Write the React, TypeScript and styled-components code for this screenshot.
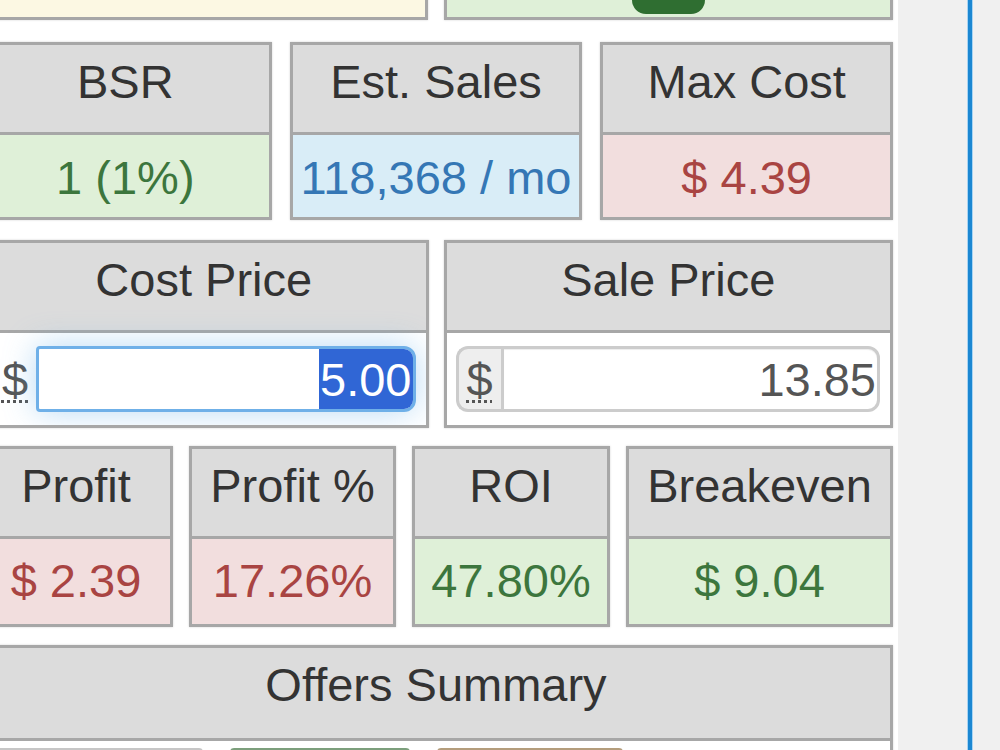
import styled, { createGlobalStyle } from "styled-components"

const GlobalStyle = createGlobalStyle`
  html, body {
    margin: 0;
    padding: 0;
    height: 750px;
    overflow: hidden;
    background: #ffffff;
    font-family: "Liberation Sans", Arial, sans-serif;
  }
  * {
    box-sizing: border-box;
  }
`

type Tone = "success" | "info" | "danger" | "warning" | "plain"

const tones: Record<Tone, { bg: string; fg: string }> = {
  success: { bg: "#dff0d8", fg: "#3c763d" },
  info: { bg: "#d9edf7", fg: "#3577b5" },
  danger: { bg: "#f2dede", fg: "#a94442" },
  warning: { bg: "#fcf8e3", fg: "#8a6d3b" },
  plain: { bg: "#ffffff", fg: "#555555" },
}

const Page = styled.div`
  display: flex;
  height: 750px;
  overflow: hidden;
`

const Main = styled.div`
  flex: none;
  width: 898px;
  background: #ffffff;
`

const Content = styled.div`
  width: 914px;
  margin-left: -21px;
  margin-top: -60px;
  display: flex;
  flex-direction: column;
  gap: 18px;
`

const Side = styled.div`
  flex: 1;
  background: #f0f0f0;
  padding-left: 69px;
`

const ScrollLine = styled.div`
  width: 6px;
  height: 100%;
  background: #1b87d2;
  border-left: 1px solid #a9d4f2;
  border-right: 1px solid #a9d4f2;
`

const Row = styled.div<{ $cols: string; $h: number; $gap?: number; $mt?: number }>`
  display: grid;
  grid-template-columns: ${(p) => p.$cols};
  column-gap: ${(p) => p.$gap ?? 16}px;
  height: ${(p) => p.$h}px;
  margin-top: ${(p) => p.$mt ?? 0}px;
`

const Card = styled.div<{ $tone?: Tone }>`
  display: flex;
  flex-direction: column;
  border: 3px solid #a7a7a7;
  background: ${(p) => tones[p.$tone ?? "plain"].bg};
  box-shadow: 0 0 2px rgba(0, 0, 0, 0.18);
  overflow: hidden;
`

const CardHead = styled.div<{ $h?: number }>`
  flex: none;
  height: ${(p) => p.$h ?? 90}px;
  padding-top: 10px;
  background: #dcdcdc;
  border-bottom: 3px solid #a7a7a7;
  color: #333333;
  font-size: 47px;
  line-height: 1.15;
  text-align: center;
  white-space: nowrap;
`

const CardValue = styled.div<{ $tone: Tone; $pt?: number }>`
  flex: 1;
  display: flex;
  align-items: center;
  justify-content: center;
  padding-top: ${(p) => p.$pt ?? 0}px;
  background: ${(p) => tones[p.$tone].bg};
  color: ${(p) => tones[p.$tone].fg};
  font-size: 47px;
  line-height: 1.15;
  white-space: nowrap;
`

const PriceCell = styled.div`
  flex: 1;
  display: flex;
  align-items: center;
  padding: 0 10px 0 9px;
  background: #ffffff;
`

const InputGroup = styled.div`
  display: flex;
  width: 100%;
  height: 66px;
`

const Addon = styled.div<{ $bare?: boolean }>`
  flex: none;
  width: 45px;
  display: flex;
  align-items: center;
  justify-content: center;
  background: ${(p) => (p.$bare ? "transparent" : "#eeeeee")};
  border: 3px solid ${(p) => (p.$bare ? "transparent" : "#cccccc")};
  border-right: 0;
  border-radius: 12px 0 0 12px;
  color: #555555;
  font-size: 47px;
  line-height: 1;
`

const Abbr = styled.abbr`
  text-decoration: underline dotted #555555;
  text-decoration-thickness: 3px;
  text-underline-offset: 4px;
  cursor: help;
`

const Field = styled.div<{ $focused?: boolean }>`
  flex: 1;
  display: flex;
  justify-content: flex-end;
  align-items: stretch;
  overflow: hidden;
  background: #ffffff;
  border: 3px solid ${(p) => (p.$focused ? "#6fb0e8" : "#cccccc")};
  border-radius: ${(p) => (p.$focused ? "4px 12px 12px 4px" : "0 12px 12px 0")};
  box-shadow: ${(p) =>
    p.$focused ? "0 0 32px rgba(102, 175, 233, 0.45)" : "inset 0 1px 1px rgba(0, 0, 0, 0.075)"};
  color: #555555;
  font-size: 47px;
  line-height: 1;
`

const FieldText = styled.span<{ $selected?: boolean }>`
  display: flex;
  align-items: center;
  padding: 0 1px;
  background: ${(p) => (p.$selected ? "#3066d5" : "transparent")};
  color: ${(p) => (p.$selected ? "#ffffff" : "#555555")};
`

const Notice = styled.div<{ $tone: Tone }>`
  display: flex;
  justify-content: center;
  align-items: flex-end;
  padding-bottom: 3px;
  border: 3px solid #a7a7a7;
  background: ${(p) => tones[p.$tone].bg};
  box-shadow: 0 0 2px rgba(0, 0, 0, 0.18);
`

const GoButton = styled.div`
  width: 73px;
  height: 50px;
  border-radius: 14px;
  background: #2f6e31;
`

const OffersBody = styled.div`
  flex: 1;
  display: flex;
  gap: 27px;
  padding: 7px 10px 0;
  background: #ffffff;
`

const chipBorders: Record<string, string> = {
  neutral: "#c6c6c6",
  green: "#7c9f7c",
  tan: "#b49d7c",
}

const OfferChip = styled.div<{ $kind: string; $w: number }>`
  flex: none;
  width: ${(p) => p.$w}px;
  height: 50px;
  border: 3px solid ${(p) => chipBorders[p.$kind]};
  border-radius: 4px;
  background: #ffffff;
`

interface StatProps {
  label: string
  value: string
  tone: Tone
  pt?: number
}

const Stat = ({ label, value, tone, pt }: StatProps): JSX.Element => (
  <Card>
    <CardHead>{label}</CardHead>
    <CardValue $tone={tone} $pt={pt}>{value}</CardValue>
  </Card>
)

const App = (): JSX.Element => {
  return (
    <Page>
      <GlobalStyle />
      <Main>
        <Content>
          <Row $cols="1fr 1fr" $h={80} $gap={16}>
            <Notice $tone="warning" />
            <Notice $tone="success">
              <GoButton />
            </Notice>
          </Row>

          <Row $cols="1fr 1fr 1fr" $h={178} $gap={18} $mt={4}>
            <Stat label="BSR" value="1 (1%)" tone="success" pt={5} />
            <Stat label="Est. Sales" value="118,368 / mo" tone="info" pt={5} />
            <Stat label="Max Cost" value="$ 4.39" tone="danger" pt={5} />
          </Row>

          <Row $cols="1fr 1fr" $h={188} $gap={15} $mt={2}>
            <Card>
              <CardHead>Cost Price</CardHead>
              <PriceCell>
                <InputGroup>
                  <Addon $bare>
                    <Abbr title="USD">$</Abbr>
                  </Addon>
                  <Field $focused>
                    <FieldText $selected>5.00</FieldText>
                  </Field>
                </InputGroup>
              </PriceCell>
            </Card>
            <Card>
              <CardHead>Sale Price</CardHead>
              <PriceCell>
                <InputGroup>
                  <Addon>
                    <Abbr title="USD">$</Abbr>
                  </Addon>
                  <Field>
                    <FieldText>13.85</FieldText>
                  </Field>
                </InputGroup>
              </PriceCell>
            </Card>
          </Row>

          <Row $cols="194px 207px 198px 267px" $h={181} $gap={16}>
            <Stat label="Profit" value="$ 2.39" tone="danger" />
            <Stat label="Profit %" value="17.26%" tone="danger" />
            <Stat label="ROI" value="47.80%" tone="success" />
            <Stat label="Breakeven" value="$ 9.04" tone="success" />
          </Row>

          <Row $cols="1fr" $h={180}>
            <Card>
              <CardHead $h={93}>Offers Summary</CardHead>
              <OffersBody>
                <OfferChip $kind="neutral" $w={211} />
                <OfferChip $kind="green" $w={180} />
                <OfferChip $kind="tan" $w={186} />
              </OffersBody>
            </Card>
          </Row>
        </Content>
      </Main>
      <Side>
        <ScrollLine />
      </Side>
    </Page>
  )
}

export default App
